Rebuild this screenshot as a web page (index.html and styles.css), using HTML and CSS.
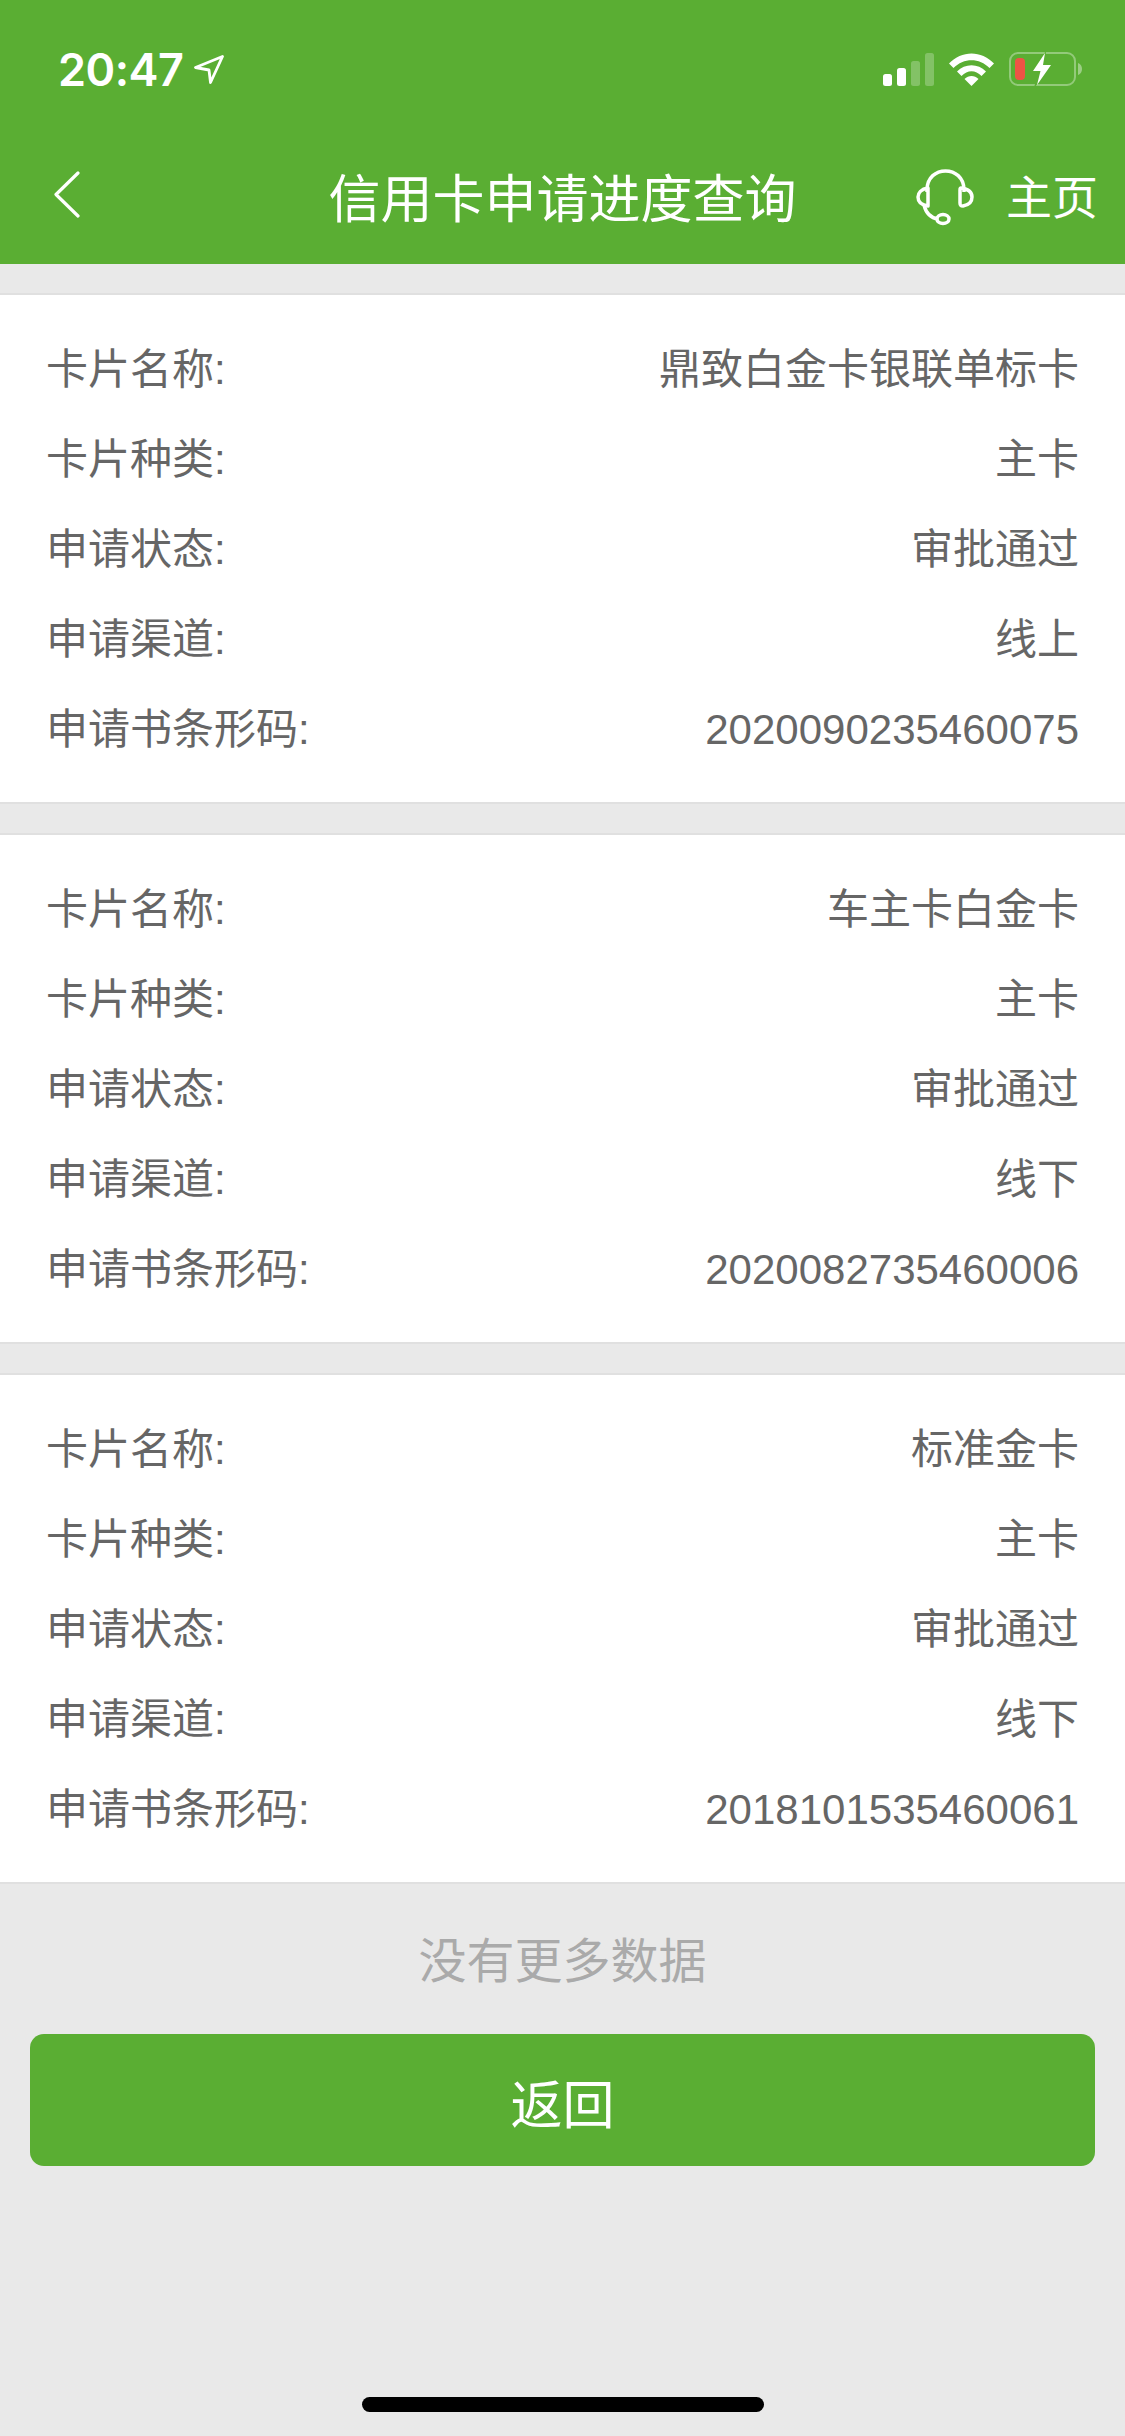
FILE: index.html
```html
<!DOCTYPE html>
<html lang="zh">

<head>
    <meta http-equiv="Content-Type" content="text/html; charset=UTF-8">
    <meta name="viewport" content="width=device-width, initial-scale=1.0">
    <title>信用卡申请进度查询</title>
    <link rel="stylesheet" href="styles.css">
</head>

<body>
    <div class="header">
        <div class="status-bar">
            <div class="status-left">
                <span class="status-time">20:47</span>
                <svg class="icon-location" width="30" height="29" viewBox="0 0 30 29">
                    <path d="M28.500 1.500 L1.500 12.500 L15 15 L16.500 27.500 Z" fill="none" stroke="#fff" stroke-width="2.800" stroke-linejoin="round"/>
                </svg>
            </div>
            <div class="status-right">
                <svg width="51" height="33" viewBox="0 0 51 33">
                    <rect x="0" y="21" width="9" height="12" rx="2.500" fill="#fff"/>
                    <rect x="14" y="15" width="9" height="18" rx="2.500" fill="#fff"/>
                    <rect x="28" y="8" width="9" height="25" rx="2.500" fill="#fff" fill-opacity="0.25"/>
                    <rect x="42" y="0" width="9" height="33" rx="2.500" fill="#fff" fill-opacity="0.25"/>
                </svg>
                <svg width="45" height="33" viewBox="0 0 45 33">
                    <path d="M0 10.500 C12.500 -3 32.500 -3 45 10.500 L40.500 15 C30.500 4.500 14.500 4.500 4.500 15 Z" fill="#fff"/>
                    <path d="M8 18.500 C16 10 29 10 37 18.500 L32.500 23 C26.500 16.500 18.500 16.500 12.500 23 Z" fill="#fff"/>
                    <path d="M15.500 26 C19.500 22 25.500 22 29.500 26 L22.500 33 Z" fill="#fff"/>
                </svg>
                <svg width="73" height="34" viewBox="0 0 73 34">
                    <rect x="1" y="1" width="65" height="32" rx="8" fill="none" stroke="#fff" stroke-opacity="0.35" stroke-width="2"/>
                    <path d="M69 11 C72 12 73 14.500 73 17 C73 19.500 72 22 69 23 Z" fill="#fff" fill-opacity="0.4"/>
                    <rect x="6" y="6" width="10" height="22" rx="4" fill="#ee5345"/>
                    <path d="M37 -1 L21 20 L29 20 L25 36 L45 12 L36 12 Z" fill="#5aae33"/>
                    <path d="M36 1 L24 19 L31.500 19 L28 33 L42 13 L34 13 Z" fill="#fff"/>
                </svg>
            </div>
        </div>
        <div class="nav-bar">
            <div class="nav-back">
                <svg width="26" height="47" viewBox="0 0 26 47">
                    <path d="M24 2 L2 23.500 L24 45" fill="none" stroke="#fff" stroke-width="3.200" stroke-linecap="round" stroke-linejoin="round"/>
                </svg>
            </div>
            <div class="nav-title">信用卡申请进度查询</div>
            <div class="nav-right">
                <svg width="58" height="58" viewBox="0 0 58 58">
                    <path d="M11 23 V21 C11 -4.500 48 -4.500 48 21 V23" fill="none" stroke="#fff" stroke-width="3.500"/>
                    <path d="M12 19 C5 20 2 24 2 28 C2 33 5 36 12 37 Z" fill="none" stroke="#fff" stroke-width="3.500" stroke-linejoin="round"/>
                    <path d="M45 19 C53 20 56 24 56 28 C56 33 53 36 47 37 C44 37 44 36 44 34 V21 C44 20 44 19 45 19 Z" fill="none" stroke="#fff" stroke-width="3.500"/>
                    <path d="M8 36 C10 44 15 49 22 50" fill="none" stroke="#fff" stroke-width="3.500"/>
                    <ellipse cx="27" cy="50" rx="6" ry="4.500" fill="none" stroke="#fff" stroke-width="3.500"/>
                </svg>
                <span class="nav-home">主页</span>
            </div>
        </div>
    </div>

    <div class="list">
        <div class="card">
            <div class="row"><span>卡片名称:</span><span>鼎致白金卡银联单标卡</span></div>
            <div class="row"><span>卡片种类:</span><span>主卡</span></div>
            <div class="row"><span>申请状态:</span><span>审批通过</span></div>
            <div class="row"><span>申请渠道:</span><span>线上</span></div>
            <div class="row"><span>申请书条形码:</span><span>2020090235460075</span></div>
        </div>
        <div class="card">
            <div class="row"><span>卡片名称:</span><span>车主卡白金卡</span></div>
            <div class="row"><span>卡片种类:</span><span>主卡</span></div>
            <div class="row"><span>申请状态:</span><span>审批通过</span></div>
            <div class="row"><span>申请渠道:</span><span>线下</span></div>
            <div class="row"><span>申请书条形码:</span><span>2020082735460006</span></div>
        </div>
        <div class="card">
            <div class="row"><span>卡片名称:</span><span>标准金卡</span></div>
            <div class="row"><span>卡片种类:</span><span>主卡</span></div>
            <div class="row"><span>申请状态:</span><span>审批通过</span></div>
            <div class="row"><span>申请渠道:</span><span>线下</span></div>
            <div class="row"><span>申请书条形码:</span><span>2018101535460061</span></div>
        </div>
    </div>

    <p class="no-more">没有更多数据</p>
    <div class="back-button">返回</div>

    <div class="home-indicator"></div>
</body>

</html>
```

FILE: styles.css
```css
* {
    font-family: "Liberation Sans", "Noto Sans CJK SC", sans-serif;
}

*,
*::before,
*::after {
    box-sizing: border-box;
}

p {
    margin: 0;
}

html,
body {
    height: 100%;
}

body {
    margin: 0;
    position: relative;
    overflow: hidden;
    background-color: #e9e9e9;
}

.header {
    height: 264px;
    background-color: #5aae33;
    color: white;
}

.status-bar {
    height: 132px;
    display: flex;
    align-items: center;
    justify-content: space-between;
    padding: 6px 43px 0 58px;
}

.status-left {
    display: flex;
    align-items: center;
    gap: 11px;
}

.status-time {
    font-family: "Inter", sans-serif;
    font-size: 45px;
    font-weight: 600;
    letter-spacing: -0.5px;
}

.status-right {
    display: flex;
    align-items: center;
    gap: 15px;
}

.nav-bar {
    height: 132px;
    display: grid;
    grid-template-columns: 1fr auto 1fr;
    align-items: center;
    padding: 0 27px;
}

.nav-back {
    display: flex;
    align-items: center;
    margin: 0 0 7px 27px;
}

.nav-title {
    padding-top: 4px;
    font-size: 52px;
    line-height: 1.2;
}

.nav-right {
    display: flex;
    align-items: center;
    justify-content: flex-end;
    gap: 32px;
}

.nav-home {
    padding-top: 2px;
    font-size: 46px;
    line-height: 1.2;
}

.list {
    padding-top: 29px;
    display: flex;
    flex-direction: column;
    gap: 29px;
}

.card {
    padding: 30px 46px 27px;
    background-color: white;
    border-top: 2px solid #e0e0e0;
    border-bottom: 2px solid #e0e0e0;
}

.row {
    height: 90px;
    display: flex;
    align-items: baseline;
    justify-content: space-between;
    font-size: 42px;
    line-height: 90px;
    color: #666;
}

.no-more {
    height: 150px;
    padding-bottom: 4px;
    display: flex;
    align-items: center;
    justify-content: center;
    font-size: 48px;
    color: #aaa;
}

.back-button {
    height: 132px;
    margin: 0 30px;
    padding-top: 3px;
    display: flex;
    align-items: center;
    justify-content: center;
    border-radius: 14px;
    background-color: #5aae33;
    color: white;
    font-size: 52px;
}

.home-indicator {
    position: absolute;
    left: 362px;
    bottom: 24px;
    width: 402px;
    height: 15px;
    border-radius: 8px;
    background-color: black;
}
```
